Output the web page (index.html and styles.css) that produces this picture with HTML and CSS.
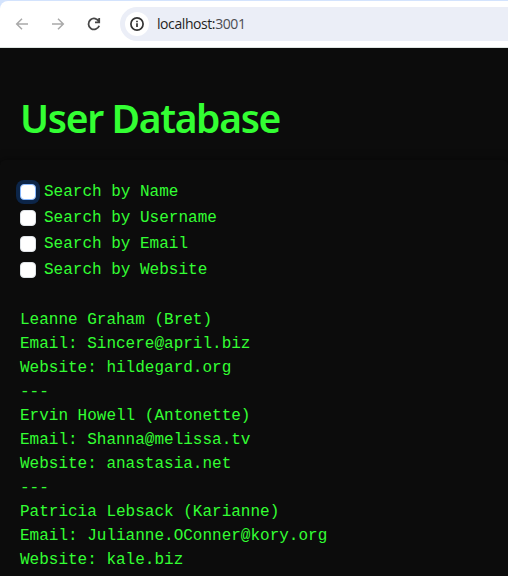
FILE: index.html
```html
<!DOCTYPE html>
<html lang="en">
<head>
<meta charset="utf-8">
<title>User Database</title>
<link rel="stylesheet" href="styles.css">
</head>
<body>
<header class="frame">
<div class="toolbar">
  <svg class="nav-icon muted" viewBox="0 0 16 16"><path d="M14 8H3M8 2.7 2.7 8 8 13.3"/></svg>
  <svg class="nav-icon muted" viewBox="0 0 16 16"><path d="M2 8h11M8 2.7 13.3 8 8 13.3"/></svg>
  <svg class="nav-icon reload" viewBox="0 0 16 16"><path d="M13 5.6A5.5 5.5 0 1 0 13.2 9.8M13.2 2v4.4H9"/></svg>
  <div class="address">
    <span class="info"><svg viewBox="0 0 16 16"><circle cx="8" cy="8" r="6.1"/><path d="M8 7.3v3.8M8 4.7v1.6"/></svg></span>
    <span class="url">localhost:<span class="port">3001</span></span>
  </div>
</div>
</header>
<main class="page">
  <h1>User Database</h1>
  <section class="panel">
    <div class="filters">
      <label class="check"><input type="checkbox" class="box focused">Search by Name</label>
      <label class="check"><input type="checkbox" class="box">Search by Username</label>
      <label class="check"><input type="checkbox" class="box">Search by Email</label>
      <label class="check"><input type="checkbox" class="box">Search by Website</label>
    </div>
    <pre class="users">Leanne Graham (Bret)
Email: Sincere@april.biz
Website: hildegard.org
---
Ervin Howell (Antonette)
Email: Shanna@melissa.tv
Website: anastasia.net
---
Patricia Lebsack (Karianne)
Email: Julianne.OConner@kory.org
Website: kale.biz</pre>
  </section>
</main>
</body>
</html>
```
FILE: styles.css
```css
* { box-sizing: border-box; }
body {
  margin: 0;
  height: 576px;
  overflow: hidden;
  background: #0c0c0c;
  color: #33ff33;
  font: 16px/24px "Courier New", "Liberation Mono", monospace;
}
.frame {
  padding-top: 1px;
  background: #d3e3fd;
}
.toolbar {
  height: 47px;
  display: flex;
  align-items: center;
  padding-left: 14px;
  background: #fff;
  border-bottom: 1px solid #dfe5e2;
  border-top-left-radius: 8px;
}
.nav-icon {
  flex: none;
  width: 16px;
  height: 16px;
  margin-right: 20px;
  fill: none;
  stroke: #474747;
  stroke-width: 1.7;
}
.muted { stroke: #a9a9a9; stroke-width: 1.5; }
.reload { margin-right: 18px; stroke-width: 1.8; }
.address {
  flex: 1;
  height: 34px;
  display: flex;
  align-items: center;
  gap: 8px;
  padding-left: 5px;
  background: #ebeef7;
  border-radius: 17px 0 0 17px;
}
.info {
  display: flex;
  align-items: center;
  justify-content: center;
  width: 24px;
  height: 24px;
  border-radius: 50%;
  background: #fff;
}
.info svg {
  width: 16px;
  height: 16px;
  fill: none;
  stroke: #333;
  stroke-width: 1.7;
}
.url {
  font: 14px/20px "Open Sans", sans-serif;
  color: #1f1f1f;
  letter-spacing: -0.42px;
}
.port { color: #4b4d52; }
.page { padding-top: 42px; }
h1 {
  margin: 0 20px 22px;
  height: 48px;
  font: 600 39px/56px "Noto Sans", sans-serif;
  letter-spacing: -1.35px;
  white-space: nowrap;
}
.panel {
  height: 440px;
  padding: 20px;
  border-radius: 5px;
  background: #0c0c0c;
  box-shadow: 0 0 10px rgba(0, 0, 0, .5);
}
.filters { display: grid; gap: 2px; margin-bottom: 26px; }
.check { display: flex; align-items: center; height: 24px; }
.box {
  appearance: none;
  width: 16px;
  height: 16px;
  margin: 0 8px 0 0;
  border: 1px solid #dee2e6;
  border-radius: 4px;
  background: #fff;
}
.focused {
  border-color: #86b7fe;
  box-shadow: 0 0 0 4px rgba(13, 110, 253, .25);
}
.users { margin: 0; font: inherit; }
```
